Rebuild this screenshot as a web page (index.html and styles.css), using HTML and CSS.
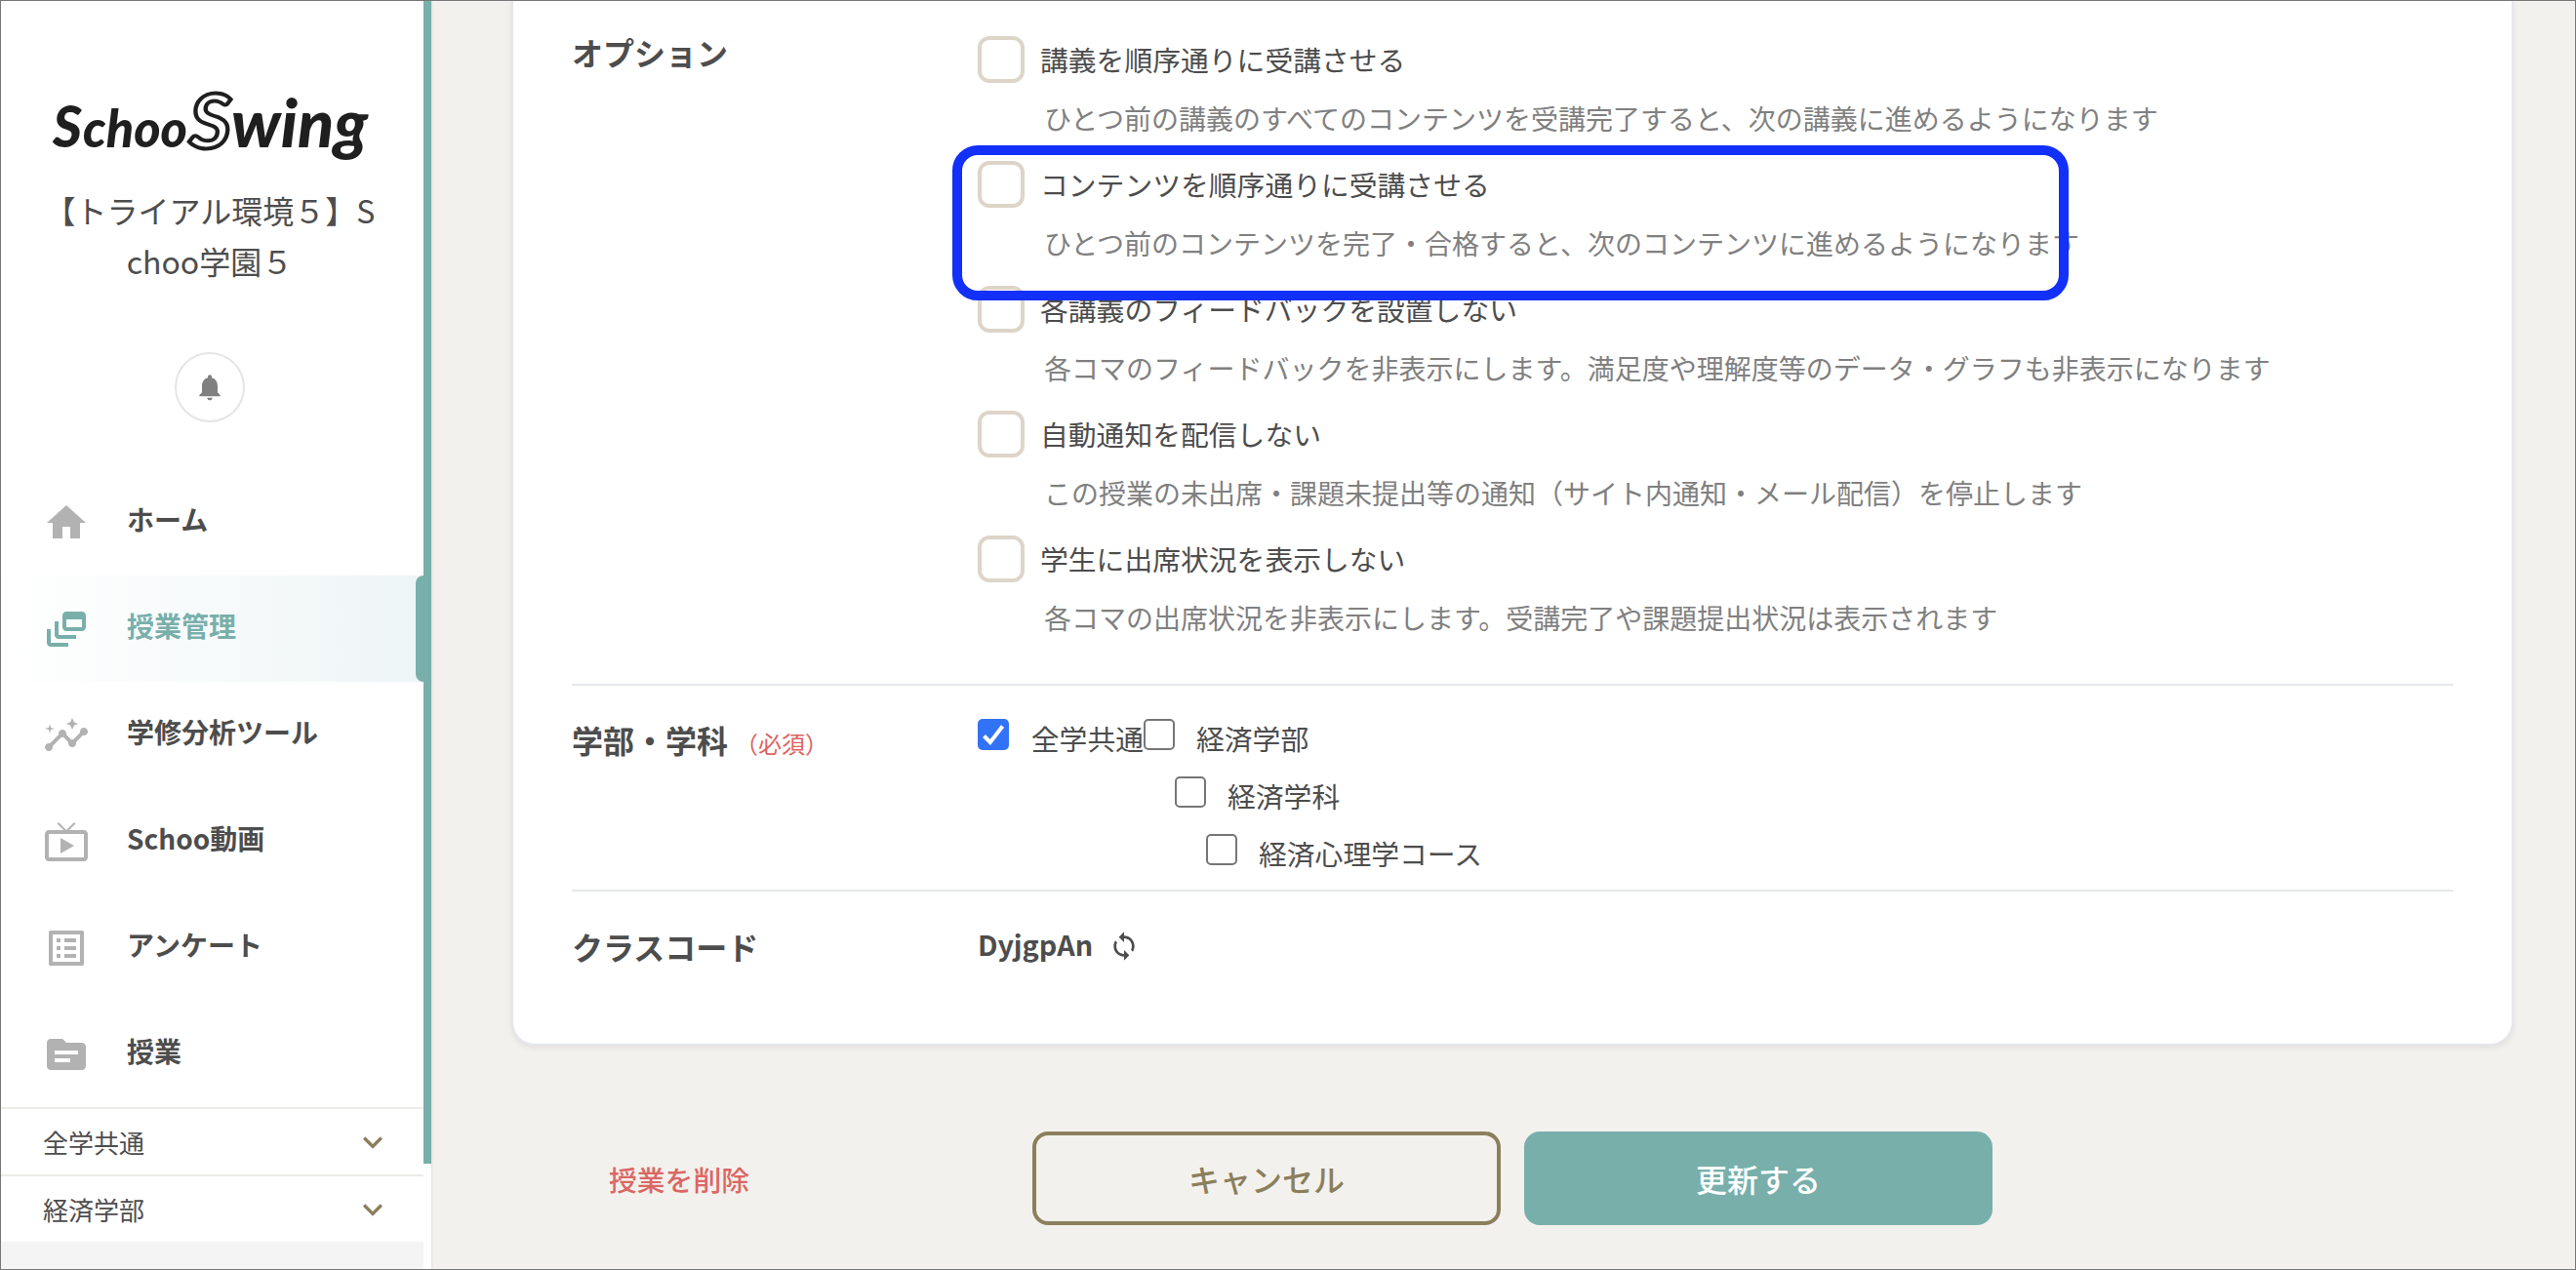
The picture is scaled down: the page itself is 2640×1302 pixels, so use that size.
FILE: index.html
```html
<!DOCTYPE html>
<html lang="ja">
<head>
    <meta charset="UTF-8">
    <meta name="viewport" content="width=device-width, initial-scale=1.0">
    <title>授業管理 - Schoo Swing</title>
    <link rel="stylesheet" href="styles.css">
</head>
<body>
    <aside class="sidebar">
        <div class="sidebar-main">
            <svg class="logo" width="340" height="130" viewBox="0 0 340 130">
                <text class="logo-text" x="6" y="99" font-size="59" textLength="30" lengthAdjust="spacingAndGlyphs">S</text>
                <text class="logo-text" x="37" y="99" font-size="54" textLength="107" lengthAdjust="spacingAndGlyphs">choo</text>
                <text class="logo-mark" x="146" y="100" font-size="76" textLength="43" lengthAdjust="spacingAndGlyphs">S</text>
                <text class="logo-text" x="189" y="99" font-size="68" textLength="140" lengthAdjust="spacingAndGlyphs">wing</text>
            </svg>
            <p class="org-name">【トライアル環境５】S<br>choo学園５</p>
            <button class="bell" aria-label="お知らせ">
                <svg width="32" height="32" viewBox="0 0 24 24"><path d="M12 22c1.1 0 2-.9 2-2h-4c0 1.1.89 2 2 2zm6-6v-5c0-3.07-1.64-5.64-4.5-6.32V4c0-.83-.67-1.5-1.5-1.5s-1.5.67-1.5 1.5v.68C7.63 5.36 6 7.92 6 11v5l-2 2v1h16v-1l-2-2z"/></svg>
            </button>

            <nav class="menu">
                <a class="menu-item">
                    <svg viewBox="0 0 24 24"><path d="M10 20v-6h4v6h5v-8h3L12 3 2 12h3v8z"/></svg>
                    <span>ホーム</span>
                </a>
                <a class="menu-item active">
                    <svg viewBox="0 0 24 24"><path d="M8 8H6v7c0 1.1.9 2 2 2h9v-2H8V8z"/><path d="M20 3h-8c-1.1 0-2 .9-2 2v6c0 1.1.9 2 2 2h8c1.1 0 2-.9 2-2V5c0-1.1-.9-2-2-2zm0 8h-8V7h8v4z"/><path d="M4 12H2v7c0 1.1.9 2 2 2h9v-2H4v-7z"/></svg>
                    <span>授業管理</span>
                </a>
                <a class="menu-item">
                    <svg viewBox="0 0 24 24"><path d="M21 8c-1.45 0-2.26 1.44-1.93 2.51l-3.55 3.56c-.3-.09-.74-.09-1.04 0l-2.55-2.55C12.27 10.45 11.46 9 10 9c-1.45 0-2.27 1.44-1.93 2.52l-4.56 4.55C2.44 15.74 1 16.55 1 18c0 1.1.9 2 2 2 1.45 0 2.26-1.44 1.93-2.51l4.55-4.56c.3.09.74.09 1.04 0l2.55 2.55C12.73 16.55 13.54 18 15 18c1.45 0 2.27-1.44 1.93-2.52l3.56-3.55C21.56 12.26 23 11.45 23 10c0-1.1-.9-2-2-2z"/><path d="M15 9l.94-2.07L18 6l-2.06-.93L15 3l-.92 2.07L12 6l2.08.93z"/><path d="M3.5 11L4 9l2-.5L4 8l-.5-2L3 8l-2 .5L3 9z"/></svg>
                    <span>学修分析ツール</span>
                </a>
                <a class="menu-item">
                    <svg viewBox="0 0 24 24"><path d="M21 6h-7.59l3.29-3.29L16 2l-4 4-4-4-.7.71L10.59 6H3c-1.1 0-2 .89-2 2v12c0 1.1.9 2 2 2h18c1.1 0 2-.9 2-2V8c0-1.11-.9-2-2-2zm0 14H3V8h18v12zM9 10v8l7-4z"/></svg>
                    <span>Schoo動画</span>
                </a>
                <a class="menu-item">
                    <svg viewBox="0 0 24 24"><path d="M19 5v14H5V5h14m1.1-2H3.9c-.5 0-.9.4-.9.9v16.2c0 .4.4.9.9.9h16.2c.4 0 .9-.5.9-.9V3.9c0-.5-.5-.9-.9-.9zM11 7h6v2h-6V7zm0 4h6v2h-6v-2zm0 4h6v2h-6zM7 7h2v2H7zm0 4h2v2H7zm0 4h2v2H7z"/></svg>
                    <span>アンケート</span>
                </a>
                <a class="menu-item">
                    <svg viewBox="0 0 24 24"><path d="M20 6h-8l-2-2H4c-1.1 0-1.99.9-1.99 2L2 18c0 1.1.9 2 2 2h16c1.1 0 2-.9 2-2V8c0-1.1-.9-2-2-2zm-6 10H6v-2h8v2zm4-4H6v-2h12v2z"/></svg>
                    <span>授業</span>
                </a>
            </nav>

            <div class="category">
                <span>全学共通</span>
                <svg width="40" height="40" viewBox="0 0 24 24"><path d="M16.59 8.59L12 13.17 7.41 8.59 6 10l6 6 6-6-1.41-1.41z"/></svg>
            </div>
            <div class="category">
                <span>経済学部</span>
                <svg width="40" height="40" viewBox="0 0 24 24"><path d="M16.59 8.59L12 13.17 7.41 8.59 6 10l6 6 6-6-1.41-1.41z"/></svg>
            </div>
            <div class="category-list"></div>
        </div>
        <div class="rail"></div>
    </aside>

    <main class="content">
        <section class="card">
            <div class="form-row options-row">
                <h3>オプション</h3>
                <div class="options">
                    <div class="option">
                        <label><span class="box"></span><span class="option-name">講義を順序通りに受講させる</span></label>
                        <p>ひとつ前の講義のすべてのコンテンツを受講完了すると、次の講義に進めるようになります</p>
                    </div>
                    <div class="option highlighted">
                        <label><span class="box"></span><span class="option-name">コンテンツを順序通りに受講させる</span></label>
                        <p>ひとつ前のコンテンツを完了・合格すると、次のコンテンツに進めるようになります</p>
                    </div>
                    <div class="option">
                        <label><span class="box"></span><span class="option-name">各講義のフィードバックを設置しない</span></label>
                        <p>各コマのフィードバックを非表示にします。満足度や理解度等のデータ・グラフも非表示になります</p>
                    </div>
                    <div class="option">
                        <label><span class="box"></span><span class="option-name">自動通知を配信しない</span></label>
                        <p>この授業の未出席・課題未提出等の通知（サイト内通知・メール配信）を停止します</p>
                    </div>
                    <div class="option">
                        <label><span class="box"></span><span class="option-name">学生に出席状況を表示しない</span></label>
                        <p>各コマの出席状況を非表示にします。受講完了や課題提出状況は表示されます</p>
                    </div>
                </div>
            </div>

            <div class="form-row department-row">
                <h3>学部・学科<span class="required">（必須）</span></h3>
                <div class="departments">
                    <label class="check">
                        <span class="tick on"><svg width="32" height="32" viewBox="0 0 32 32"><path d="M6.5 17.5l6.3 6.5L25.5 7.5"/></svg></span>全学共通
                    </label>
                    <div class="tree">
                        <label class="check"><span class="tick"></span>経済学部</label>
                        <div class="tree">
                            <label class="check"><span class="tick"></span>経済学科</label>
                            <div class="tree">
                                <label class="check"><span class="tick"></span>経済心理学コース</label>
                            </div>
                        </div>
                    </div>
                </div>
            </div>

            <div class="form-row code-row">
                <h3>クラスコード</h3>
                <div class="class-code">
                    <strong>DyjgpAn</strong>
                    <svg width="32" height="32" viewBox="0 0 24 24"><path d="M12 4V1L8 5l4 4V6c3.31 0 6 2.69 6 6 0 1.01-.25 1.97-.7 2.8l1.46 1.46C19.54 15.03 20 13.57 20 12c0-4.42-3.58-8-8-8zm0 14c-3.31 0-6-2.69-6-6 0-1.01.25-1.97.7-2.8L5.24 7.74C4.46 8.97 4 10.43 4 12c0 4.42 3.58 8 8 8v3l4-4-4-4v3z"/></svg>
                </div>
            </div>
        </section>

        <div class="actions">
            <a class="delete">授業を削除</a>
            <button class="btn btn-cancel">キャンセル</button>
            <button class="btn btn-submit">更新する</button>
        </div>
    </main>
</body>
</html>
```
FILE: styles.css
```css
*, *::before, *::after {
    box-sizing: border-box;
}
body {
    margin: 0;
    height: 1302px;
    display: flex;
    overflow: hidden;
    border: 1px solid #777;
    background-color: #f3f1ed;
    color: #4d4d4d;
    font-family: 'Noto Sans CJK JP', sans-serif;
    font-size: 28.8px;
}
h3, p {
    margin: 0;
}
svg {
    display: block;
    fill: currentColor;
    flex-shrink: 0;
}
button {
    font-family: inherit;
    padding: 0;
}

/* sidebar */
.sidebar {
    width: 441px;
    flex-shrink: 0;
    display: flex;
    background-color: #fff;
    box-shadow: 1px 0 2px rgba(0, 0, 0, 0.08);
}
.sidebar-main {
    width: 433px;
    display: flex;
    flex-direction: column;
}
.rail {
    width: 8px;
    height: 1192px;
    background-color: #79afab;
}
.logo {
    margin: 51px 0 0 47px;
}
.logo-text {
    font-family: Lato, sans-serif;
    font-weight: 900;
    font-style: italic;
    fill: #1f1f1f;
}
.logo-mark {
    font-family: Lato, sans-serif;
    font-weight: 700;
    font-style: italic;
    fill: #fff;
    stroke: #1f1f1f;
    stroke-width: 4px;
}
.org-name {
    margin-top: 7px;
    padding-right: 5px;
    font-size: 32px;
    line-height: 52px;
    text-align: center;
}
.bell {
    width: 72px;
    height: 72px;
    margin: 68px auto 0 178px;
    display: flex;
    align-items: center;
    justify-content: center;
    border: 2px solid #e5e5e5;
    border-radius: 50%;
    background: none;
    color: #808080;
}
.menu {
    margin-top: 48px;
}
.menu-item {
    height: 109px;
    display: flex;
    align-items: center;
    padding-left: 43px;
    font-size: 28px;
    font-weight: 700;
}
.menu-item svg {
    width: 48px;
    height: 48px;
    margin-right: 38px;
    color: #b2b2b2;
}
.menu-item span {
    padding-bottom: 7px;
}
.menu-item.active {
    color: #79afab;
    background: linear-gradient(90deg, #fff 0%, #eef5f6 100%);
    position: relative;
}
.menu-item.active svg {
    color: #79afab;
}
.menu-item.active::after {
    content: '';
    position: absolute;
    top: 0;
    right: 0;
    width: 8px;
    height: 100%;
    border-radius: 8px 0 0 8px;
    background-color: #79afab;
}
.category {
    height: 69px;
    display: flex;
    align-items: center;
    justify-content: space-between;
    padding: 0 32px 0 43px;
    border-top: 2px solid #ecebe6;
    font-size: 26px;
}
.category svg {
    color: #8b7f5c;
}
.category-list {
    flex: 1;
    background-color: #f4f4f4;
}

/* course form */
.content {
    flex: 1;
    padding: 0 63px 0 82px;
}
.card {
    height: 1071px;
    padding: 0 60px;
    border: 2px solid #e5e7eb;
    border-top: none;
    border-radius: 0 0 24px 24px;
    background-color: #fff;
    box-shadow: 0 2px 6px rgba(0, 0, 0, 0.08);
}
.form-row {
    display: grid;
    grid-template-columns: 416px 1fr;
}
.form-row + .form-row {
    border-top: 2px solid #e5e7eb;
}
.form-row h3 {
    font-size: 32px;
    line-height: 48px;
}
.options-row {
    height: 700px;
    padding-top: 36px;
}
.options-row h3 {
    margin-top: -8px;
}
.option {
    height: 128px;
    position: relative;
}
.option label {
    height: 48px;
    display: flex;
    align-items: center;
    gap: 16px;
}
.option-name {
    padding-bottom: 2px;
}
.box {
    width: 48px;
    height: 48px;
    border: 4px solid #ddd5c8;
    border-radius: 12px;
}
.option p {
    margin: 15px 0 0 68px;
    font-size: 28px;
    line-height: 42px;
    color: #808080;
    white-space: nowrap;
}
/* frame around the option being explained */
.highlighted::before {
    content: '';
    position: absolute;
    z-index: 1;
    left: -26px;
    top: -16px;
    width: 1144px;
    height: 159px;
    border: 10px solid #1230f8;
    border-radius: 26px;
}
.department-row {
    height: 211px;
    padding-top: 34px;
}
.department-row h3 {
    margin-top: -3px;
    white-space: nowrap;
}
.required {
    margin-left: 7px;
    font-size: 24px;
    font-weight: 400;
    color: #de6361;
}
.departments {
    display: flex;
}
.check {
    height: 59px;
    display: flex;
    line-height: 40px;
}
.tick {
    width: 32px;
    height: 32px;
    margin-right: 22px;
    border: 2px solid #767676;
    border-radius: 5px;
}
.tick.on {
    margin-right: 22.8px;
    border: none;
    background-color: #3273f6;
}
.tick svg {
    fill: none;
    stroke: #fff;
    stroke-width: 4;
}
.tree .tree {
    margin-left: 32px;
}
.code-row {
    padding-top: 32px;
}
.class-code {
    height: 48px;
    display: flex;
    align-items: center;
    gap: 16px;
}
.class-code strong {
    padding-bottom: 5px;
}

/* buttons */
.actions {
    display: flex;
    align-items: center;
    margin-top: 88px;
    padding-left: 100px;
}
.delete {
    width: 434px;
    font-weight: 500;
    color: #db6764;
}
.btn {
    width: 480px;
    height: 96px;
    margin-right: 24px;
    border: none;
    border-radius: 16px;
    font-size: 32px;
    font-weight: 500;
}
.btn-cancel {
    border: 4px solid #8b7f5c;
    background: none;
    color: #8b7f5c;
}
.btn-submit {
    background-color: #79afab;
    color: #fff;
}
```
